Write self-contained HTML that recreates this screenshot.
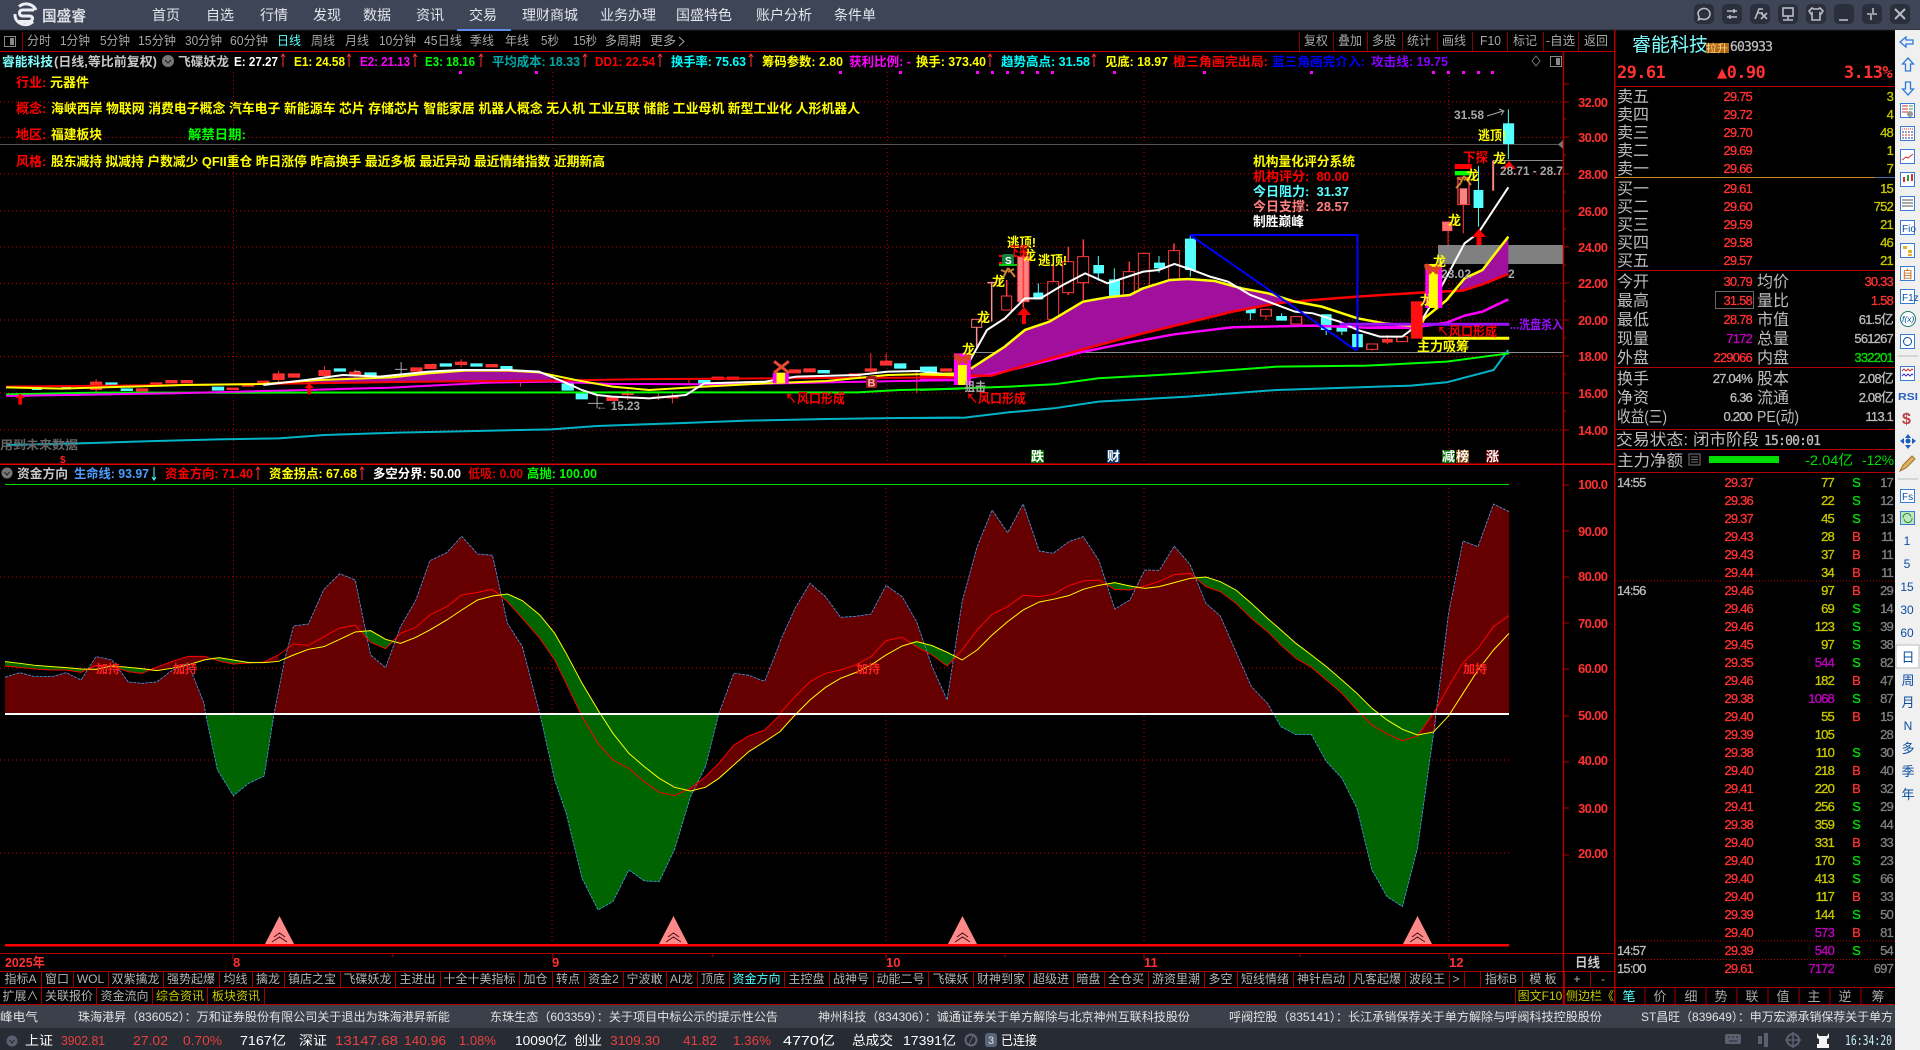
<!DOCTYPE html>
<html lang="zh-CN"><head><meta charset="utf-8"><title>国盛睿</title>
<style>
html,body{margin:0;padding:0;background:#000;width:1920px;height:1050px;overflow:hidden}
svg{display:block;position:absolute;left:0;top:0}
text{font-family:"Liberation Sans","Noto Sans CJK SC",sans-serif;white-space:pre}
.z{font-family:"Liberation Sans","WenQuanYi Zen Hei","Noto Sans CJK SC",sans-serif}
.b{font-weight:bold}
.nav{font-size:14px;fill:#e3e6ec;text-anchor:middle}
.tb{font-size:12.5px;fill:#a8a8a8}
.tab{font-size:12px;fill:#b4b4b4;text-anchor:middle}
.lg{font-size:12.5px;font-weight:bold}
.ax{font-size:13px;font-weight:bold;fill:#ff3030}
.n{font-family:"DejaVu Sans Mono","Liberation Mono",monospace;font-size:13px;letter-spacing:-.8px;stroke-width:.3px}
.e{text-anchor:end}
.l{font-size:16px;fill:#bdbdbd}
.r{fill:#ff3232;stroke:#ff3232}.y{fill:#c8c800;stroke:#c8c800}.s{fill:#bcbcbc;stroke:#bcbcbc}.g{fill:#808080;stroke:#808080}.m{fill:#c000c0;stroke:#c000c0}.gr{fill:#00e000;stroke:#00e000}
.tk{font-size:12px;fill:#e0e0e0}
.st{font-size:13px}
.yl{fill:#ffff00;font-weight:bold;font-size:13px}
.rd{fill:#ff0000;font-weight:bold;font-size:13px}
.ic{fill:none;stroke:#b8bdc8;stroke-width:1.6}
.side{font-size:12px;fill:#0b4ea2;text-anchor:middle}
.bx{fill:#fff;stroke:#3a7bd5;stroke-width:1}
.ln polyline,.ln path,.ln polygon{vector-effect:non-scaling-stroke}
</style></head><body>
<svg width="1920" height="1050" viewBox="0 0 1920 1050" xmlns="http://www.w3.org/2000/svg">
<defs>
<clipPath id="up"><rect x="-20" y="-100" width="2000" height="800"/></clipPath>
<clipPath id="dn"><rect x="-20" y="700" width="2000" height="800"/></clipPath>
</defs>
<rect width="1920" height="1050" fill="#000"/>

<!-- top bar -->
<rect width="1920" height="30" fill="#3e4557"/>
<rect y="29.500" width="1920" height="1" fill="#23262e"/>
<path d="M19 6.500A11 11 0 0 1 36 10M33 21.500A11 11 0 0 1 16 19.500M16 19.500A11 11 0 0 1 15 14" fill="none" stroke="#eceef2" stroke-width="3"/>
<path d="M34 10H23Q19.500 10 19.500 13T23 16H29Q32.500 16 32.500 18.500T29 21.500H18" fill="none" stroke="#eceef2" stroke-width="3"/>
<text x="42" y="21" font-size="15" font-weight="bold" fill="#d8dbe2" textLength="44" lengthAdjust="spacingAndGlyphs">国盛睿</text>
<text class="nav" x="166" y="20">首页</text><text class="nav" x="220" y="20">自选</text><text class="nav" x="274" y="20">行情</text><text class="nav" x="327" y="20">发现</text><text class="nav" x="377" y="20">数据</text><text class="nav" x="430" y="20">资讯</text><text class="nav" x="483" y="20">交易</text><text class="nav" x="550" y="20">理财商城</text><text class="nav" x="628" y="20">业务办理</text><text class="nav" x="704" y="20">国盛特色</text><text class="nav" x="784" y="20">账户分析</text><text class="nav" x="855" y="20">条件单</text>
<rect x="457" y="29" width="54" height="2" fill="#5b8def"/>
<g fill="#2a2f3b">
<rect x="1694" y="4" width="20" height="20" rx="5"/><rect x="1722" y="4" width="20" height="20" rx="5"/><rect x="1750" y="4" width="20" height="20" rx="5"/><rect x="1778" y="4" width="20" height="20" rx="5"/><rect x="1806" y="4" width="20" height="20" rx="5"/><rect x="1834" y="4" width="20" height="20" rx="5"/><rect x="1862" y="4" width="20" height="20" rx="5"/><rect x="1890" y="4" width="20" height="20" rx="5"/>
</g>
<g class="ic">
<path d="M1698 14a6 5.500 0 1 1 3 4.700l-2.500 1 .6-2.500Z"/><path d="M1701 14h.1M1704 14h.1M1707 14h.1"/>
<path d="M1727 11h10M1727 17h10M1734 9v4M1730 15v4"/>
<path d="M1755 19l4-10h4M1757 13h6M1761 13l6 6M1767 13l-6 6"/>
<rect x="1783" y="8" width="10" height="8"/><path d="M1783 20h10M1788 16v4"/>
<path d="M1812 8l-3 3 2 3 1-1v7h8v-7l1 1 2-3-3-3-2 1h-4Z"/>
<path d="M1839 20h9"/>
<path d="M1867 14h10M1873 8v5M1871 20v-5"/>
<path d="M1895 9l10 10M1905 9l-10 10" stroke-width="2"/>
</g>

<!-- toolbar -->
<rect x="4.500" y="36.500" width="11" height="10" fill="none" stroke="#888"/><rect x="10" y="38" width="4" height="7" fill="#888"/>
<g class="tb">
<text x="27" y="45" textLength="24" lengthAdjust="spacingAndGlyphs">分时</text><text x="60" y="45" textLength="30" lengthAdjust="spacingAndGlyphs">1分钟</text><text x="100" y="45" textLength="30" lengthAdjust="spacingAndGlyphs">5分钟</text><text x="138" y="45" textLength="38" lengthAdjust="spacingAndGlyphs">15分钟</text><text x="185" y="45" textLength="37" lengthAdjust="spacingAndGlyphs">30分钟</text><text x="230" y="45" textLength="38" lengthAdjust="spacingAndGlyphs">60分钟</text><text x="277" y="45" textLength="24" lengthAdjust="spacingAndGlyphs" style="fill:#55ffff">日线</text><text x="311" y="45" textLength="24" lengthAdjust="spacingAndGlyphs">周线</text><text x="345" y="45" textLength="24" lengthAdjust="spacingAndGlyphs">月线</text><text x="379" y="45" textLength="37" lengthAdjust="spacingAndGlyphs">10分钟</text><text x="424" y="45" textLength="38" lengthAdjust="spacingAndGlyphs">45日线</text><text x="470" y="45" textLength="24" lengthAdjust="spacingAndGlyphs">季线</text><text x="505" y="45" textLength="24" lengthAdjust="spacingAndGlyphs">年线</text><text x="541" y="45" textLength="18" lengthAdjust="spacingAndGlyphs">5秒</text><text x="573" y="45" textLength="24" lengthAdjust="spacingAndGlyphs">15秒</text><text x="605" y="45" textLength="36" lengthAdjust="spacingAndGlyphs">多周期</text><text x="650" y="45" textLength="26" lengthAdjust="spacingAndGlyphs">更多</text>
<text x="1304" y="45" textLength="24" lengthAdjust="spacingAndGlyphs">复权</text><text x="1338" y="45" textLength="24" lengthAdjust="spacingAndGlyphs">叠加</text><text x="1372" y="45" textLength="24" lengthAdjust="spacingAndGlyphs">多股</text><text x="1407" y="45" textLength="24" lengthAdjust="spacingAndGlyphs">统计</text><text x="1442" y="45" textLength="24" lengthAdjust="spacingAndGlyphs">画线</text><text x="1480" y="45" textLength="21" lengthAdjust="spacingAndGlyphs">F10</text><text x="1513" y="45" textLength="24" lengthAdjust="spacingAndGlyphs">标记</text><text x="1546" y="45" textLength="29" lengthAdjust="spacingAndGlyphs">-自选</text><text x="1584" y="45" textLength="24" lengthAdjust="spacingAndGlyphs">返回</text>
</g>
<path d="M679 37l5 4.500-5 4.500" fill="none" stroke="#a8a8a8"/>
<path d="M22.500 32V51M1299.500 32V51M1333.500 32V51M1367.500 32V51M1402.500 32V51M1437.500 32V51M1472.500 32V51M1507.500 32V51M1543.500 32V51M1578.500 32V51" stroke="#8a0000"/>
<rect y="51" width="1615" height="1" fill="#c00000"/>

<!-- grid main -->
<g stroke="#d00000" stroke-dasharray="1 3" fill="none" shape-rendering="crispEdges">
<path d="M0 102H1563M0 137.500H1563M0 174H1563M0 211H1563M0 247H1563M0 283.500H1563M0 320H1563M0 356.500H1563M0 393H1563M0 430H1563"/>
<path d="M233.500 72V464M553 72V464M887 72V464M1144 72V464M1449 72V464"/>
<path d="M0 577H1509M0 668H1509M0 760H1509M0 853H1509"/>
<path d="M233.500 484V945M552 484V945M886 484V945M1144 484V945M1449 484V945"/>
</g>
<rect x="0" y="144" width="1563" height="1" fill="#555"/>
<path d="M1563 140l-5 4.500 5 4.500Z" fill="#777"/>

<!-- legend -->
<text class="lg" x="2" y="66" fill="#7fffff" textLength="51" lengthAdjust="spacingAndGlyphs">睿能科技</text><text class="lg" x="54" y="66" fill="#c8c8c8" textLength="103" lengthAdjust="spacingAndGlyphs">(日线,等比前复权)</text>
<circle cx="168" cy="61" r="6" fill="#777"/><path d="M165 60l3 3 3-3" stroke="#222" fill="none"/>
<text class="lg" x="178" y="66" fill="#c8c8c8" textLength="51" lengthAdjust="spacingAndGlyphs">飞碟妖龙</text>
<text class="lg" x="234" y="66" fill="#fff" textLength="44" lengthAdjust="spacingAndGlyphs">E: 27.27</text>
<text class="lg" x="294" y="66" fill="#ffff00" textLength="51" lengthAdjust="spacingAndGlyphs">E1: 24.58</text>
<text class="lg" x="360" y="66" fill="#ff00ff" textLength="50" lengthAdjust="spacingAndGlyphs">E2: 21.13</text>
<text class="lg" x="425" y="66" fill="#00ff00" textLength="50" lengthAdjust="spacingAndGlyphs">E3: 18.16</text>
<text class="lg" x="492" y="66" fill="#00a8a8" textLength="88" lengthAdjust="spacingAndGlyphs">平均成本: 18.33</text>
<text class="lg" x="595" y="66" fill="#ff0000" textLength="60" lengthAdjust="spacingAndGlyphs">DD1: 22.54</text>
<text class="lg" x="671" y="66" fill="#00ffff" textLength="75" lengthAdjust="spacingAndGlyphs">换手率: 75.63</text>
<text class="lg" x="762" y="66" fill="#ffff00" textLength="81" lengthAdjust="spacingAndGlyphs">筹码参数: 2.80</text>
<text class="lg" x="849" y="66" fill="#ff00ff" textLength="62" lengthAdjust="spacingAndGlyphs">获利比例: -</text>
<text class="lg" x="916" y="66" fill="#ffff00" textLength="70" lengthAdjust="spacingAndGlyphs">换手: 373.40</text>
<text class="lg" x="1001" y="66" fill="#00ffff" textLength="89" lengthAdjust="spacingAndGlyphs">趋势高点: 31.58</text>
<text class="lg" x="1105" y="66" fill="#ffff00" textLength="63" lengthAdjust="spacingAndGlyphs">见底: 18.97</text>
<text class="lg" x="1173" y="66" fill="#ff0000" textLength="95" lengthAdjust="spacingAndGlyphs">橙三角画完出局:</text>
<text class="lg" x="1272" y="66" fill="#0000ff" textLength="93" lengthAdjust="spacingAndGlyphs">蓝三角画完介入:</text>
<text class="lg" x="1371" y="66" fill="#8800ff" textLength="77" lengthAdjust="spacingAndGlyphs">攻击线: 19.75</text>
<path d="M283 54V67M281 57l2-3 2 3M349 54V67M347 57l2-3 2 3M415 54V67M413 57l2-3 2 3M481 54V67M479 57l2-3 2 3M585 54V67M583 57l2-3 2 3M660 54V67M658 57l2-3 2 3M751 54V67M749 57l2-3 2 3M990 54V67M988 57l2-3 2 3M1094 54V67M1092 57l2-3 2 3" stroke="#ff3333" fill="none"/>
<path d="M1536 56l4 5-4 5-4-5Z" fill="none" stroke="#777"/><rect x="1550.500" y="56.500" width="11" height="10" fill="none" stroke="#888"/><rect x="1556" y="58" width="4" height="7" fill="#888"/>
<path d="M459 71h3v3h-3zM535 71h3v3h-3zM839 71h3v3h-3zM899 71h3v3h-3zM976 71h3v3h-3zM991 71h3v3h-3zM1006 71h3v3h-3zM1021 71h3v3h-3zM1036 71h3v3h-3zM1051 71h3v3h-3zM1113 71h3v3h-3zM1203 71h3v3h-3zM1310 71h3v3h-3zM1432 71h3v3h-3zM1447 71h3v3h-3zM1462 71h3v3h-3zM1477 71h3v3h-3zM1491 71h3v3h-3z" fill="#ff00ff"/>

<!-- info block -->
<text x="16" y="87" class="rd">行业:</text><text x="50" y="87" class="yl" textLength="39" lengthAdjust="spacingAndGlyphs">元器件</text>
<text x="16" y="113" class="rd">概念:</text><text x="51" y="113" class="yl" textLength="809" lengthAdjust="spacingAndGlyphs">海峡西岸 物联网 消费电子概念 汽车电子 新能源车 芯片 存储芯片 智能家居 机器人概念 无人机 工业互联 储能 工业母机 新型工业化 人形机器人</text>
<text x="16" y="139" class="rd">地区:</text><text x="51" y="139" class="yl" textLength="51" lengthAdjust="spacingAndGlyphs">福建板块</text>
<text x="188" y="139" font-size="13" font-weight="bold" fill="#00ff00" textLength="58" lengthAdjust="spacingAndGlyphs">解禁日期:</text>
<text x="16" y="166" class="rd">风格:</text><text x="51" y="166" class="yl" textLength="554" lengthAdjust="spacingAndGlyphs">股东减持 拟减持 户数减少 QFII重仓 昨日涨停 昨高换手 最近多板 最近异动 最近情绪指数 近期新高</text>

<!-- main: left part candles and lines (zoom-8 space) -->
<g class="ln" transform="translate(0,340) scale(.6124,.3333)">
<path fill="#55ffff" d="M52 140h16v10h-16zM100 140h16v8h-16zM172 127h20v10h-20zM197 145h20v8h-20zM346 140h20v12h-20zM545 85h20v10h-20zM595 97h20v13h-20zM718 70h20v10h-20zM768 70h20v10h-20zM817 78h20v25h-20zM867 97h20v23h-20zM917 130h20v22h-20zM940 160h20v18h-20zM1140 120h20v13h-20zM1335 90h20v10h-20zM1460 70h20v16h-20zM1510 80h20v20h-20z"/>
<path fill="#ff3030" d="M147 125h20v25h-20zM222 145h20v10h-20zM245 127h20v13h-20zM270 120h20v10h-20zM295 120h20v10h-20zM370 143h20v7h-20zM395 130h20v10h-20zM420 122h20v8h-20zM445 100h20v20h-20zM470 100h20v13h-20zM520 90h20v18h-20zM570 95h20v10h-20zM670 82h20v13h-20zM693 72h20v15h-20zM743 65h20v10h-20zM793 72h20v10h-20zM990 170h20v13h-20zM1015 155h20v10h-20zM1065 170h20v5h-20zM1088 168h20v7h-20zM1162 110h20v10h-20zM1187 110h20v10h-20zM1288 88h20v12h-20zM1312 85h20v12h-20zM1386 100h20v10h-20zM1412 85h20v10h-20zM1437 62h20v15h-20zM1535 85h20v10h-20z"/>
<path stroke="#ff3030" fill="none" stroke-width="1" d="M157 118V160M455 92V130M530 78V112M580 88V112M753 58V82M850 100V140M1098 160V190M1075 160V180M1422 40V96M1447 40V64M1497 95V160M1125 118V135M1025 150V180"/>
<path stroke="#aaa" fill="none" d="M655 66V105M645 88h20M578 94h10M975 165V205M960 190h25"/>
<polygon fill="#a0109c" points="500,122 560,112 640,110 700,98 760,90 830,90 880,95 905,120 700,125 500,130"/>
<polyline fill="none" stroke="#00b4c8" stroke-width="2" points="10,315 130,310 255,303 355,298 455,295 530,285 650,278 750,274 900,268 975,258 1100,250 1220,242 1350,237 1470,234 1568,233"/>
<polyline fill="none" stroke="#00ff00" stroke-width="2" points="10,163 160,158 1400,157 1470,150 1568,146"/>
<polyline fill="none" stroke="#ff00ff" stroke-width="2" points="10,168 280,160 500,150 640,143 800,128 900,125 1000,132 1200,133 1350,127 1568,120"/>
<polyline fill="none" stroke="#ff0000" stroke-width="2" points="10,140 300,135 500,130 700,125 900,122 1030,118 1260,115 1568,112"/>
<polyline fill="none" stroke="#ffff00" stroke-width="2" points="10,142 100,146 300,135 430,132 520,120 640,112 700,100 760,92 830,92 880,97 940,120 1000,140 1060,150 1150,140 1250,130 1350,123 1450,105 1560,100"/>
<polyline fill="none" stroke="#ffffff" stroke-width="2" points="430,135 500,120 560,105 620,110 700,95 750,90 830,90 880,95 920,125 950,150 975,165 1000,170 1060,175 1120,165 1150,130 1250,125 1300,110 1400,105 1450,95 1500,93 1568,108"/>
<path fill="#ff0000" d="M33 160l-8 14h5v20h6v-20h5ZM505 130l-8 14h5v19h6v-19h5Z"/>
<rect x="1262" y="98" width="26" height="32" fill="#ff00ff"/><rect x="1268" y="98" width="14" height="32" fill="#ffff00"/>
<path d="M1264 64l24 34M1288 64l-24 34" stroke="#e64a30" stroke-width="3" fill="none"/>
</g>
<rect x="866" y="376" width="11" height="12" rx="2" fill="#a01818"/>
<text x="867.500" y="386.500" font-size="11" font-weight="bold" fill="#ffb0b0">B</text>
<text x="785" y="403" class="rd" textLength="60" lengthAdjust="spacingAndGlyphs">↖风口形成</text>
<text x="596" y="410" font-size="12" font-weight="bold" fill="#a8a8a8" textLength="44" lengthAdjust="spacingAndGlyphs">← 15.23</text>
<text x="0" y="449" font-size="12" font-weight="bold" fill="#666" textLength="78" lengthAdjust="spacingAndGlyphs">用到未来数据</text>
<text x="60" y="463" font-size="10" font-weight="bold" fill="#ff2020">$</text>

<!-- main: right part (zoom-7 space) -->
<rect x="1438" y="245" width="125" height="19" fill="#808080"/>
<rect x="975" y="352" width="588" height="1" fill="#8a8a8a"/>
<path d="M1493 160.500H1563" stroke="#888"/>
<g class="ln" transform="translate(940,220) scale(.3333)">
<path fill="#55ffff" d="M280 218h30v20h-30zM460 135h32v25h-32zM507 178h33v57h-33zM642 128h33v17h-33zM735 56h33v94h-33zM780 188h33v27h-33zM870 200h33v48h-33z"/>
<path stroke="#55ffff" stroke-width="1" fill="none" d="M295 190V238M475 108V182M523 145V243M657 108V158M751 45V170M885 248V258"/>
<g fill="none" stroke="#ff3c3c" stroke-width="3" style="vector-effect:none">
<rect x="95" y="298" width="30" height="24" stroke="#ff7070"/>
<rect x="185" y="228" width="30" height="42"/>
<rect x="233" y="110" width="34" height="135" fill="#ff8080"/>
<rect x="323" y="185" width="33" height="113"/>
<rect x="368" y="125" width="33" height="93"/>
<rect x="413" y="110" width="33" height="78"/>
<rect x="550" y="155" width="33" height="70"/>
<rect x="595" y="100" width="33" height="105"/>
<rect x="686" y="92" width="33" height="103"/>
<rect x="823" y="188" width="33" height="29"/>
</g>
<path fill="none" stroke="#ff3c3c" stroke-width="1.500" d="M200 180V228M250 90V262M340 130V185M340 298V310M385 80V125M385 218V225M430 58V110M430 188V240M568 125V155M568 225V265M612 205V240M702 70V92M840 217V228"/>
<path fill="none" stroke="#ff9090" stroke-width="1.500" d="M110 322V380M155 188V305M142 188H165"/>
</g>
<g class="ln" transform="translate(920,100) scale(.4464,.3333)">
<path fill="#55ffff" d="M695 560h24v47h-24zM730 615h22v25h-22zM798 648h24v14h-24zM898 643h24v47h-24zM933 680h24v15h-24zM968 702h24v40h-24zM0 815h38v-15h-38z"/>
<path stroke="#55ffff" fill="none" d="M707 607V617M740 640V660M810 640V648M910 690V705M945 695V705"/>
<g fill="none" stroke="#ff3c3c" stroke-width="3" style="vector-effect:none"><rect x="763" y="628" width="24" height="20"/><rect x="831" y="650" width="24" height="22"/><rect x="1001" y="732" width="24" height="16"/><rect x="1068" y="710" width="24" height="15"/></g>
<path fill="#ff3030" d="M1035 717h24v11h-24z"/>
<path stroke="#ff3030" fill="none" d="M775 648V660M1047 705V733M1013 748V752"/>
<polygon fill="#a0109c" points="115,805 190,740 235,690 290,665 365,605 420,592 470,585 500,565 560,540 600,537 660,543 720,565 780,580 840,605 800,610 700,635 640,655 500,700 360,750 240,795 160,827 115,830"/>
<polygon fill="#a0109c" points="1205,572 1220,535 1260,510 1318,410 1318,522 1260,553 1215,572"/>
<polyline fill="none" stroke="#00b4c8" stroke-width="2" points="0,954 100,953 200,937 300,925 400,905 600,890 800,870 1100,857 1180,847 1285,810 1318,750"/>
<polyline fill="none" stroke="#00ff00" stroke-width="2" points="0,870 100,865 200,860 300,853 400,835 600,820 800,800 1000,797 1180,785 1320,760"/>
<polyline fill="none" stroke="#ff00ff" stroke-width="2.500" points="0,840 80,840 170,820 240,798 360,757 460,730 570,703 700,682 880,677 1000,683 1120,680 1180,668 1220,647 1260,635 1318,598"/>
<polyline fill="none" stroke="#ff0000" stroke-width="2.500" points="0,828 160,827 240,795 360,750 500,700 640,655 700,635 800,610 880,600 980,590 1120,578 1215,572 1260,553 1318,522"/>
<polyline fill="none" stroke="#ffff00" stroke-width="2.500" points="0,823 75,825 115,805 190,740 235,690 290,665 365,605 420,592 470,585 500,565 560,540 600,537 660,543 720,565 780,580 840,605 900,620 980,655 1040,670 1120,680 1130,655 1180,600 1220,535 1260,510 1318,410"/>
<polyline fill="none" stroke="#ffffff" stroke-width="2" points="100,810 150,690 190,655 235,595 270,595 320,555 370,520 420,550 500,515 535,510 570,492 610,510 650,530 690,545 740,585 790,610 840,635 880,640 940,665 980,690 1030,710 1080,710 1120,670 1160,580 1220,430 1250,400 1318,262"/>
<path fill="none" stroke="#0000ff" stroke-width="2" d="M605 405H980V750M605 405L978 752"/>
<path stroke="#9a10ff" stroke-width="3" fill="none" d="M940 673H1320"/>
<path stroke="#ff00ff" stroke-width="2" fill="none" d="M1000 684H1120"/>
<path stroke="#ffff00" stroke-width="3" fill="none" d="M1125 715H1320"/>
<rect x="1100" y="604" width="26" height="112" fill="#ff1010"/>
<rect x="76" y="760" width="38" height="95" fill="#ff00ff"/><rect x="85" y="795" width="20" height="60" fill="#ffff00"/>
<rect x="1132" y="492" width="38" height="132" fill="#ff00ff"/><rect x="1140" y="492" width="20" height="132" fill="#ffff00"/>
<rect x="1170" y="365" width="22" height="28" fill="#ff7070" stroke="#ff3030"/>
<path fill="none" stroke="#ff3030" d="M1183 393V435"/>
<rect x="1205" y="232" width="25" height="82" fill="none" stroke="#ff3c3c" stroke-width="3" style="vector-effect:none"/><rect x="1209" y="265" width="17" height="48" fill="#ff8080"/>
<path fill="none" stroke="#ff3c3c" d="M1217 314V400"/>
<rect x="1240" y="270" width="22" height="54" fill="#55ffff"/><path stroke="#55ffff" fill="none" d="M1251 198V380"/>
<path stroke="#ff8080" fill="none" stroke-width="2" d="M1284 182V272"/>
<rect x="1306" y="70" width="25" height="62" fill="#55ffff"/><path stroke="#55ffff" fill="none" d="M1318 28V178"/>
<rect x="1198" y="192" width="38" height="15" fill="#ff0000"/><rect x="1198" y="213" width="38" height="13" fill="#00ff00"/>
</g>
<path fill="#ff0000" d="M1479 229l-7 8h4.500v8h5v-8h4.500ZM1509 161l-7 8h4.500v-1h5v1h4.500ZM1024 307l-7 8h5v9h4v-9h5Z"/>
<g fill="none" stroke="#d08030" stroke-width="2">
<path d="M1008 268l-4 8-4 4M1008 268l4 5 3 4M1006 272l-5-2M1008 272l6-3M1008 265v1"/>
<path d="M1464 176l-4 8-4 4M1464 176l4 5 3 4M1462 180l-5-2M1464 180l6-3"/>
</g>
<path d="M962.500 357l-6-3.500-3 1 1 5 3 1-1 3 3 1 3-3 3 3 3-1-1-3 3-1 1-5-3-1Z" fill="#d8402a"/>
<path d="M1433 267l-6-3.500-3 1 1 5 3 1-1 3 3 1 3-3 3 3 3-1-1-3 3-1 1-5-3-1Z" fill="#d8402a"/>
<rect x="1002" y="254" width="12" height="12" rx="2" fill="#148040"/><text x="1005" y="264" font-size="10" font-weight="bold" fill="#fff">S</text>
<path d="M999 256h3M999 263h3M1014 256h3" stroke="#ff0000" stroke-width="2"/><path d="M999 265h18" stroke="#00cc00" stroke-width="2"/>

<text x="1253" y="166" class="yl" textLength="102" lengthAdjust="spacingAndGlyphs">机构量化评分系统</text>
<text x="1253" y="181" class="rd" textLength="96" lengthAdjust="spacingAndGlyphs">机构评分:  80.00</text>
<text x="1253" y="196" font-size="13" font-weight="bold" fill="#55ffff" textLength="96" lengthAdjust="spacingAndGlyphs">今日阻力:  31.37</text>
<text x="1253" y="211" font-size="13" font-weight="bold" fill="#ff8080" textLength="96" lengthAdjust="spacingAndGlyphs">今日支撑:  28.57</text>
<text x="1253" y="226" font-size="13" font-weight="bold" fill="#fff" textLength="51" lengthAdjust="spacingAndGlyphs">制胜巅峰</text>
<g class="yl">
<text x="1007" y="247" textLength="29" lengthAdjust="spacingAndGlyphs">逃顶!</text><text x="1038" y="265" textLength="29" lengthAdjust="spacingAndGlyphs">逃顶!</text><text x="1478" y="140" textLength="28" lengthAdjust="spacingAndGlyphs">逃顶!</text>
<text x="1023" y="260">龙</text><text x="992" y="286">龙</text><text x="977" y="322">龙</text><text x="962" y="354">龙</text><text x="1448" y="225">龙</text><text x="1466" y="180">龙</text><text x="1493" y="163">龙</text><text x="1433" y="266">龙</text><text x="1420" y="305">龙</text>
<text x="1417" y="351" textLength="52" lengthAdjust="spacingAndGlyphs">主力吸筹</text>
</g>
<g class="rd">
<text x="1010" y="256" fill="#f00" textLength="18" lengthAdjust="spacingAndGlyphs">下探</text><text x="1463" y="162" textLength="25" lengthAdjust="spacingAndGlyphs">下探</text>
<text x="966" y="403" textLength="60" lengthAdjust="spacingAndGlyphs">↖风口形成</text><text x="1437" y="336" textLength="60" lengthAdjust="spacingAndGlyphs">↖风口形成</text>
</g>
<g font-size="12" font-weight="bold" fill="#a8a8a8">
<text x="1454" y="119" textLength="30" lengthAdjust="spacingAndGlyphs">31.58</text><text x="1500" y="175" textLength="63" lengthAdjust="spacingAndGlyphs">28.71 - 28.7</text><text x="1441" y="278" textLength="30" lengthAdjust="spacingAndGlyphs">23.02</text><text x="1508" y="278">2</text><text x="964" y="391" textLength="22" lengthAdjust="spacingAndGlyphs">狙击</text>
</g>
<path d="M1487 116l16-5M1499 109l5 2-3 4" stroke="#a8a8a8" fill="none"/>
<text x="1510" y="329" font-size="12.500" font-weight="bold" fill="#9a10ff" textLength="53" lengthAdjust="spacingAndGlyphs">...洗盘杀入</text>
<g font-size="13" font-weight="bold" fill="#fff">
<rect x="1031" y="450" width="13" height="13" fill="#007000"/><text x="1031" y="461">跌</text>
<rect x="1107" y="450" width="13" height="13" fill="#003366"/><text x="1107" y="461">财</text>
<rect x="1442" y="450" width="13" height="13" fill="#007000"/><text x="1442" y="461">减</text>
<rect x="1456" y="450" width="13" height="13" fill="#7a4000"/><text x="1456" y="461">榜</text>
<rect x="1486" y="450" width="13" height="13" fill="#660000"/><text x="1486" y="461">涨</text>
</g>

<!-- sub pane -->
<rect y="463.500" width="1615" height="1.500" fill="#e00000"/>
<circle cx="7" cy="473" r="5.500" fill="#777"/><path d="M4.500 472l2.500 3 2.500-3" stroke="#222" fill="none"/>
<text class="lg" x="17" y="478" fill="#c8c8c8" textLength="51" lengthAdjust="spacingAndGlyphs">资金方向</text>
<text class="lg" x="74" y="478" fill="#4f9cff" textLength="75" lengthAdjust="spacingAndGlyphs">生命线: 93.97</text>
<text class="lg" x="165" y="478" fill="#ff0000" textLength="88" lengthAdjust="spacingAndGlyphs">资金方向: 71.40</text>
<text class="lg" x="269" y="478" fill="#ffff00" textLength="88" lengthAdjust="spacingAndGlyphs">资金拐点: 67.68</text>
<text class="lg" x="373" y="478" fill="#fff" textLength="88" lengthAdjust="spacingAndGlyphs">多空分界: 50.00</text>
<text class="lg" x="468" y="478" fill="#e00000" textLength="55" lengthAdjust="spacingAndGlyphs">低吸: 0.00</text>
<text class="lg" x="527" y="478" fill="#00ff00" textLength="70" lengthAdjust="spacingAndGlyphs">高抛: 100.00</text>
<path d="M154 467V480M152 477l2 3 2-3" stroke="#55ffff" fill="none"/><path d="M258 467V480M256 470l2-3 2 3M362 467V480M360 470l2-3 2 3" stroke="#ff3333" fill="none"/>
<rect x="5" y="484" width="1504" height="1" fill="#00e000"/>

<g class="ln" transform="translate(0,480) scale(.4975,.3333)">
<polygon clip-path="url(#up)" fill="#660000" points="10,700 10,592 40,578 70,590 105,590 133,578 163,600 193,530 225,540 258,606 285,610 315,606 345,572 378,550 410,670 413,700 437,870 469,947 500,910 531,888 551,700 572,540 590,438 620,432 651,328 683,281 714,300 745,525 775,563 805,440 836,360 864,242 898,218 928,169 960,222 990,226 1020,430 1050,500 1085,700 1115,900 1138,1000 1170,1195 1202,1290 1232,1265 1264,1170 1295,1203 1325,1205 1356,1108 1388,950 1418,860 1445,700 1475,580 1505,586 1537,604 1568,488 1568,700"/>
<polygon clip-path="url(#dn)" fill="#006400" points="10,700 413,700 437,870 469,947 500,910 531,888 551,700 1085,700 1115,900 1138,1000 1170,1195 1202,1290 1232,1265 1264,1170 1295,1203 1325,1205 1356,1108 1388,950 1418,860 1445,700 1568,700"/>
<polygon fill="#006400" points="10,545 40,550 70,556 105,560 133,563 163,567 178,568 163,577 133,570 105,570 70,567 40,562 10,558"/>
<polygon fill="#006400" points="240,560 258,562 285,566 300,568 285,580 258,575 240,568"/>
<polygon fill="#006400" points="420,533 440,533 469,540 500,545 531,546 500,549 469,552 440,543 420,537"/>
<polygon fill="#006400" points="722,452 745,452 775,478 792,486 775,506 745,487"/>
<polygon fill="#006400" points="1000,343 1020,342 1050,362 1085,405 1115,460 1138,520 1170,610 1202,690 1232,760 1264,820 1295,860 1325,895 1356,922 1378,930 1356,947 1325,937 1295,905 1264,865 1232,840 1202,790 1170,710 1138,610 1115,540 1085,475 1050,415 1020,365"/>
<polygon fill="#660000" points="1378,930 1388,925 1418,890 1445,850 1475,795 1505,768 1537,750 1568,705 1568,755 1537,785 1505,815 1475,855 1445,895 1418,922 1388,933"/>
<polygon fill="#660000" points="300,568 315,562 345,545 378,529 410,529 420,535 410,540 378,555 345,565 315,572"/>
<polygon fill="#660000" points="531,546 551,532 560,525 560,544 531,548"/>
<polyline fill="none" stroke="#4a9cf0" stroke-width=".8" stroke-dasharray="3 1" points="10,592 40,578 70,590 105,590 133,578 163,600 193,530 225,540 258,606 285,610 315,606 345,572 378,550 410,670 413,700 437,870 469,947 500,910 531,888 551,700 572,540 590,438 620,432 651,328 683,281 714,300 745,525 775,563 805,440 836,360 864,242 898,218 928,169 960,222 990,226 1020,430 1050,500 1085,700 1115,900 1138,1000 1170,1195 1202,1290 1232,1265 1264,1170 1295,1203 1325,1205 1356,1108 1388,950 1418,860 1445,700 1475,580 1505,586 1537,604 1568,488"/>
<polyline fill="none" stroke="#ff0000" stroke-width="1" points="10,558 40,562 70,567 105,570 133,570 163,577 193,556 225,560 258,575 285,580 315,562 345,545 378,529 410,529 440,543 469,552 500,549 531,546 560,525 590,492 620,496 651,470 683,444 714,436 745,487 775,506 805,460 836,442 864,405 898,380 928,345 960,337 990,328 1020,365 1050,415 1085,475 1115,540 1138,610 1170,710 1202,790 1232,840 1264,865 1295,905 1325,937 1356,947 1388,925 1418,890 1445,850 1475,795 1505,768 1537,750 1568,705"/>
<polyline fill="none" stroke="#ffff00" stroke-width="1" points="10,545 40,550 70,556 105,560 133,563 163,567 193,568 225,558 258,562 285,566 315,572 345,565 378,555 410,540 440,533 469,540 500,548 531,548 560,544 590,525 620,508 651,500 683,478 714,456 745,452 775,478 805,490 836,472 864,450 898,420 928,390 960,360 990,348 1020,342 1050,362 1085,405 1115,460 1138,520 1170,610 1202,690 1232,760 1264,820 1295,860 1325,895 1356,922 1388,933 1418,922 1445,895 1475,855 1505,815 1537,785 1568,755"/>
</g>
<g class="ln" transform="translate(780,480) scale(.5357,.3333)">
<polygon clip-path="url(#up)" fill="#660000" points="0,700 0,485 28,385 56,310 85,350 113,412 141,409 170,402 198,316 228,350 255,425 284,560 312,660 340,365 368,200 396,90 425,158 454,72 484,213 510,220 539,185 566,170 595,240 625,387 653,360 681,270 708,271 736,198 766,255 795,370 822,408 851,515 880,620 910,670 921,700 1225,700 1248,400 1275,183 1303,200 1332,72 1361,95 1361,700"/>
<polygon clip-path="url(#dn)" fill="#006400" points="921,700 935,740 963,764 992,764 1020,845 1049,895 1077,985 1105,1170 1133,1250 1162,1280 1190,1105 1220,760 1225,700"/>
<polygon fill="#006400" points="245,485 255,485 284,497 312,517 330,528 312,558 284,525 255,500 245,492"/>
<polygon fill="#006400" points="608,310 625,308 653,318 665,322 653,330 625,328 608,315"/>
<polygon fill="#006400" points="775,290 795,291 822,305 851,330 880,370 910,415 935,450 963,490 992,525 1020,560 1049,600 1077,640 1105,685 1133,720 1162,748 1190,765 1162,782 1133,762 1105,735 1077,690 1049,640 1020,600 992,562 963,535 935,495 910,455 880,415 851,370 822,335 795,320"/>
<polygon fill="#660000" points="1190,765 1220,700 1225,690 1225,745 1220,756"/>
<polygon fill="#660000" points="0,700 35,700 0,755"/>
<polyline fill="none" stroke="#4a9cf0" stroke-width=".8" stroke-dasharray="3 1" points="0,485 28,385 56,310 85,350 113,412 141,409 170,402 198,316 228,350 255,425 284,560 312,660 340,365 368,200 396,90 425,158 454,72 484,213 510,220 539,185 566,170 595,240 625,387 653,360 681,270 708,271 736,198 766,255 795,370 822,408 851,515 880,620 910,670 935,740 963,764 992,764 1020,845 1049,895 1077,985 1105,1170 1133,1250 1162,1280 1190,1105 1220,760 1248,400 1275,183 1303,200 1332,72 1361,95"/>
<polyline fill="none" stroke="#ff0000" stroke-width="1" points="0,700 28,650 56,605 85,580 113,570 141,555 170,530 198,482 228,472 255,500 284,525 312,558 340,510 368,450 396,403 425,380 454,346 484,350 510,343 539,317 566,303 595,300 625,328 653,330 681,318 708,304 736,284 766,280 795,320 822,335 851,370 880,415 910,455 935,495 963,535 992,562 1020,600 1049,640 1077,690 1105,735 1133,762 1162,782 1190,768 1220,700 1248,620 1275,548 1303,505 1332,440 1361,407"/>
<polyline fill="none" stroke="#ffff00" stroke-width="1" points="0,755 28,705 56,660 85,622 113,595 141,578 170,555 198,525 228,498 255,485 284,497 312,517 340,540 368,510 396,465 425,425 454,390 484,366 510,358 539,347 566,328 595,316 625,308 653,318 681,325 708,320 736,308 766,295 795,291 822,305 851,330 880,370 910,415 935,450 963,490 992,525 1020,560 1049,600 1077,640 1105,685 1133,720 1162,748 1190,765 1220,756 1248,708 1275,640 1303,570 1332,510 1361,460"/>
</g>
<rect x="5" y="713" width="1504" height="2" fill="#ffffff"/>
<g fill="#ff8888"><path d="M279.500 916L265 944H294ZM673.500 916L659 944H688ZM962.500 916L948 944H977ZM1417.500 916L1403 944H1432Z"/></g>
<g fill="none" stroke="#401018"><path d="M274 937l5.500-4 5.500 4M272 942l7.500-5 7.500 5M668 937l5.500-4 5.500 4M666 942l7.500-5 7.500 5M957 937l5.500-4 5.500 4M955 942l7.500-5 7.500 5M1412 937l5.500-4 5.500 4M1410 942l7.500-5 7.500 5"/></g>
<rect x="5" y="944" width="1504" height="2.500" fill="#ff0000"/>
<g font-size="12" fill="#ff2020" font-weight="bold"><text x="96" y="673">加持</text><text x="173" y="673">加持</text><text x="856" y="673">加持</text><text x="1463" y="673">加持</text></g>

<!-- axes -->
<path d="M1563.500 52V1005" stroke="#b00000" stroke-width="1.500"/>
<path d="M1563 84h6M1563 102h6M1563 119h3M1563 137h6M1563 155h3M1563 174h6M1563 192h3M1563 211h6M1563 229h3M1563 247h6M1563 265h3M1563 283h6M1563 301h3M1563 320h6M1563 338h3M1563 356h6M1563 374h3M1563 393h6M1563 411h3M1563 430h6M1563 485h6M1563 531h6M1563 577h6M1563 623h6M1563 669h6M1563 716h6M1563 762h6M1563 808h6M1563 855h6" stroke="#b00000"/>
<g class="ax">
<text x="1578" y="107" textLength="30">32.00</text><text x="1578" y="142" textLength="30">30.00</text><text x="1578" y="179" textLength="30">28.00</text><text x="1578" y="216" textLength="30">26.00</text><text x="1578" y="252" textLength="30">24.00</text><text x="1578" y="288" textLength="30">22.00</text><text x="1578" y="325" textLength="30">20.00</text><text x="1578" y="361" textLength="30">18.00</text><text x="1578" y="398" textLength="30">16.00</text><text x="1578" y="435" textLength="30">14.00</text>
<text x="1578" y="489" textLength="30">100.0</text><text x="1578" y="536" textLength="30">90.00</text><text x="1578" y="581" textLength="30">80.00</text><text x="1578" y="628" textLength="30">70.00</text><text x="1578" y="673" textLength="30">60.00</text><text x="1578" y="720" textLength="30">50.00</text><text x="1578" y="765" textLength="30">40.00</text><text x="1578" y="813" textLength="30">30.00</text><text x="1578" y="858" textLength="30">20.00</text>
</g>

<!-- date row -->
<rect y="953" width="1615" height="1" fill="#b00000"/>
<path d="M233 954v5M393 954v3M553 954v5M713 954v3M886 954v5M1005 954v3M1144 954v5M1300 954v3M1449 954v5" stroke="#b00000"/>
<g font-size="13" font-weight="bold" fill="#ff3030">
<text x="5" y="967" textLength="40" lengthAdjust="spacingAndGlyphs">2025年</text><text x="233" y="967">8</text><text x="552" y="967">9</text><text x="886" y="967">10</text><text x="1144" y="967">11</text><text x="1449" y="967">12</text>
</g>
<text x="1575" y="967" font-size="13" font-weight="bold" fill="#c8c8c8" textLength="25" lengthAdjust="spacingAndGlyphs">日线</text>

<!-- tabs -->
<rect y="971" width="1615" height="1" fill="#b00000"/><rect y="987" width="1615" height="1" fill="#b00000"/><rect y="1004" width="1920" height="1" fill="#b00000"/>
<path d="M41.500 971V987M73.500 971V987M108.500 971V987M163.500 971V987M219.500 971V987M252.500 971V987M284.500 971V987M340.500 971V987M395.500 971V987M440.500 971V987M519.500 971V987M552.500 971V987M584.500 971V987M623.500 971V987M666.500 971V987M697.500 971V987M729.500 971V987M784.500 971V987M829.500 971V987M873.500 971V987M928.500 971V987M973.500 971V987M1029.500 971V987M1073.500 971V987M1104.500 971V987M1148.500 971V987M1204.500 971V987M1237.500 971V987M1293.500 971V987M1349.500 971V987M1405.500 971V987M1449.500 971V987M1464.500 971V987M1480.500 971V987M1522.500 971V987M1564.500 971V987M1590.500 971V987M41.500 988V1004M96.500 988V1004M152.500 988V1004M207.500 988V1004M264.500 988V1004M1515.500 988V1004M1564.500 988V1004" stroke="#a00000" fill="none"/>
<g class="tab">
<text x="20.500" y="983">指标A</text><text x="57" y="983">窗口</text><text x="90.500" y="983">WOL</text><text x="135.500" y="983">双紫擒龙</text><text x="191" y="983">强势起爆</text><text x="235.500" y="983">均线</text><text x="268" y="983">擒龙</text><text x="312" y="983">镇店之宝</text><text x="367.500" y="983">飞碟妖龙</text><text x="417.500" y="983">主进出</text><text x="479.500" y="983">十全十美指标</text><text x="535.500" y="983">加仓</text><text x="568" y="983">转点</text><text x="603.500" y="983">资金2</text><text x="644.500" y="983">宁波敢</text><text x="681.500" y="983">AI龙</text><text x="713" y="983">顶底</text><text x="756.500" y="983" style="fill:#55ffff">资金方向</text><text x="806.500" y="983">主控盘</text><text x="851" y="983">战神号</text><text x="900.500" y="983">动能二号</text><text x="950.500" y="983">飞碟妖</text><text x="1001" y="983">财神到家</text><text x="1051" y="983">超级进</text><text x="1088.500" y="983">暗盘</text><text x="1126" y="983">全仓买</text><text x="1176" y="983">游资里潮</text><text x="1220.500" y="983">多空</text><text x="1265" y="983">短线情绪</text><text x="1321" y="983">神针启动</text><text x="1377" y="983">凡客起爆</text><text x="1427" y="983">波段王</text><text x="1456" y="983">&gt;</text><text x="1501" y="983">指标B</text><text x="1543" y="983">模 板</text><text x="1577" y="983">+</text><text x="1603" y="983">-</text>
<text x="20.500" y="1000">扩展∧</text><text x="69" y="1000">关联报价</text><text x="124.500" y="1000">资金流向</text><text x="180" y="1000" style="fill:#c8c800">综合资讯</text><text x="236" y="1000" style="fill:#c8c800">板块资讯</text><text x="1540" y="1000" style="fill:#c8c800">图文F10</text><text x="1590" y="1000" style="fill:#c8c800">侧边栏《</text>
</g>

<!-- right panel -->
<rect x="1614" y="30" width="1.500" height="975" fill="#b00000"/>
<text x="1632" y="51" font-size="19" fill="#7fffff" textLength="76" lengthAdjust="spacingAndGlyphs">睿能科技</text>
<rect x="1706" y="43" width="23" height="10" fill="#b06a10"/><text x="1706" y="52" font-size="11" fill="#ffd090">拉升</text>
<text class="n s" x="1730" y="51">603933</text>
<text x="1617" y="78" font-size="17" font-weight="bold" fill="#ff3232" letter-spacing="-.6" style="font-family:'DejaVu Sans Mono',monospace">29.61</text>
<text x="1717" y="78" font-size="17" font-weight="bold" fill="#ff3232" letter-spacing="-.6" style="font-family:'DejaVu Sans Mono',monospace">▲0.90</text>
<text x="1892" y="78" font-size="17" font-weight="bold" fill="#ff3232" text-anchor="end" letter-spacing="-.6" style="font-family:'DejaVu Sans Mono',monospace">3.13%</text>
<path d="M1615 86.500H1895M1615 270.500H1895M1615 367.500H1895M1615 429.500H1895M1615 449.500H1895M1615 472.500H1895" stroke="#b00000"/>
<path d="M1615 177.500H1875" stroke="#c89020"/><path d="M1875 177.500H1895" stroke="#4070b0"/>
<g class="l z">
<text x="1617" y="102">卖五</text><text x="1617" y="120">卖四</text><text x="1617" y="138">卖三</text><text x="1617" y="156">卖二</text><text x="1617" y="174">卖一</text>
<text x="1617" y="194">买一</text><text x="1617" y="212">买二</text><text x="1617" y="230">买三</text><text x="1617" y="248">买四</text><text x="1617" y="266">买五</text>
<text x="1617" y="287">今开</text><text x="1617" y="306">最高</text><text x="1617" y="325">最低</text><text x="1617" y="344">现量</text><text x="1617" y="363">外盘</text>
<text x="1757" y="287">均价</text><text x="1757" y="306">量比</text><text x="1757" y="325">市值</text><text x="1757" y="344">总量</text><text x="1757" y="363">内盘</text>
<text x="1617" y="384">换手</text><text x="1617" y="403">净资</text><text x="1617" y="422" textLength="50" lengthAdjust="spacingAndGlyphs">收益(三)</text>
<text x="1757" y="384">股本</text><text x="1757" y="403">流通</text><text x="1757" y="422" textLength="42" lengthAdjust="spacingAndGlyphs">PE(动)</text>
<text x="1616" y="445" textLength="72" lengthAdjust="spacingAndGlyphs">交易状态:</text><text x="1693" y="445" textLength="66" lengthAdjust="spacingAndGlyphs">闭市阶段</text>
<text x="1617" y="466" textLength="66" lengthAdjust="spacingAndGlyphs">主力净额</text>
</g>
<text class="n s" x="1764" y="445">15:00:01</text>
<rect x="1689" y="454" width="11" height="11" fill="none" stroke="#777"/><path d="M1691 457h7M1691 459.500h7M1691 462h7" stroke="#777"/>
<rect x="1709" y="456" width="70" height="7" fill="#00e000"/>
<text x="1805" y="465" font-size="14" fill="#00e000" textLength="48" lengthAdjust="spacingAndGlyphs">-2.04亿</text><text x="1862" y="465" font-size="14" fill="#00e000" textLength="32" lengthAdjust="spacingAndGlyphs">-12%</text>
<g class="n e">
<text class="r" x="1752" y="101">29.75</text><text class="r" x="1752" y="119">29.72</text><text class="r" x="1752" y="137">29.70</text><text class="r" x="1752" y="155">29.69</text><text class="r" x="1752" y="173">29.66</text>
<text class="r" x="1752" y="193">29.61</text><text class="r" x="1752" y="211">29.60</text><text class="r" x="1752" y="229">29.59</text><text class="r" x="1752" y="247">29.58</text><text class="r" x="1752" y="265">29.57</text>
<text class="y" x="1893" y="101">3</text><text class="y" x="1893" y="119">4</text><text class="y" x="1893" y="137">48</text><text class="y" x="1893" y="155">1</text><text class="y" x="1893" y="173">7</text>
<text class="y" x="1893" y="193">15</text><text class="y" x="1893" y="211">752</text><text class="y" x="1893" y="229">21</text><text class="y" x="1893" y="247">46</text><text class="y" x="1893" y="265">21</text>
<text class="r" x="1752" y="286">30.79</text><text class="r" x="1752" y="305">31.58</text><text class="r" x="1752" y="324">28.78</text><text class="m" x="1752" y="343">7172</text><text class="r" x="1752" y="362">229066</text>
<text class="r" x="1893" y="286">30.33</text><text class="r" x="1893" y="305">1.58</text><text class="s" x="1893" y="324">61.5亿</text><text class="s" x="1893" y="343">561267</text><text class="gr" x="1893" y="362">332201</text>
<text class="s" x="1752" y="383">27.04%</text><text class="s" x="1752" y="402">6.36</text><text class="s" x="1752" y="421">0.200</text>
<text class="s" x="1893" y="383">2.08亿</text><text class="s" x="1893" y="402">2.08亿</text><text class="s" x="1893" y="421">113.1</text>
</g>
<rect x="1715.500" y="291.500" width="38" height="17" fill="none" stroke="#666"/>

<!-- ticks -->
<path d="M1615 581H1895M1615 941H1895M1615 959.500H1895" stroke="#c00000" stroke-dasharray="1 2"/>
<g class="n s"><text x="1617" y="487">14:55</text><text x="1617" y="595">14:56</text><text x="1617" y="955">14:57</text><text x="1617" y="973">15:00</text></g>
<g class="n r e">
<text x="1753" y="487">29.37</text><text x="1753" y="505">29.36</text><text x="1753" y="523">29.37</text><text x="1753" y="541">29.43</text><text x="1753" y="559">29.43</text><text x="1753" y="577">29.44</text><text x="1753" y="595">29.46</text><text x="1753" y="613">29.46</text><text x="1753" y="631">29.46</text><text x="1753" y="649">29.45</text><text x="1753" y="667">29.35</text><text x="1753" y="685">29.46</text><text x="1753" y="703">29.38</text><text x="1753" y="721">29.40</text><text x="1753" y="739">29.39</text><text x="1753" y="757">29.38</text><text x="1753" y="775">29.40</text><text x="1753" y="793">29.41</text><text x="1753" y="811">29.41</text><text x="1753" y="829">29.38</text><text x="1753" y="847">29.40</text><text x="1753" y="865">29.40</text><text x="1753" y="883">29.40</text><text x="1753" y="901">29.40</text><text x="1753" y="919">29.39</text><text x="1753" y="937">29.40</text><text x="1753" y="955">29.39</text><text x="1753" y="973">29.61</text>
</g>
<g class="n e">
<text class="y" x="1834" y="487">77</text><text class="y" x="1834" y="505">22</text><text class="y" x="1834" y="523">45</text><text class="y" x="1834" y="541">28</text><text class="y" x="1834" y="559">37</text><text class="y" x="1834" y="577">34</text><text class="y" x="1834" y="595">97</text><text class="y" x="1834" y="613">69</text><text class="y" x="1834" y="631">123</text><text class="y" x="1834" y="649">97</text><text class="m" x="1834" y="667">544</text><text class="y" x="1834" y="685">182</text><text class="m" x="1834" y="703">1068</text><text class="y" x="1834" y="721">55</text><text class="y" x="1834" y="739">105</text><text class="y" x="1834" y="757">110</text><text class="y" x="1834" y="775">218</text><text class="y" x="1834" y="793">220</text><text class="y" x="1834" y="811">256</text><text class="y" x="1834" y="829">359</text><text class="y" x="1834" y="847">331</text><text class="y" x="1834" y="865">170</text><text class="y" x="1834" y="883">413</text><text class="y" x="1834" y="901">117</text><text class="y" x="1834" y="919">144</text><text class="m" x="1834" y="937">573</text><text class="m" x="1834" y="955">540</text><text class="m" x="1834" y="973">7172</text>
</g>
<g class="n" text-anchor="middle">
<text class="gr" x="1856" y="487">S</text><text class="gr" x="1856" y="505">S</text><text class="gr" x="1856" y="523">S</text><text class="r" x="1856" y="541">B</text><text class="r" x="1856" y="559">B</text><text class="r" x="1856" y="577">B</text><text class="r" x="1856" y="595">B</text><text class="gr" x="1856" y="613">S</text><text class="gr" x="1856" y="631">S</text><text class="gr" x="1856" y="649">S</text><text class="gr" x="1856" y="667">S</text><text class="r" x="1856" y="685">B</text><text class="gr" x="1856" y="703">S</text><text class="r" x="1856" y="721">B</text><text class="gr" x="1856" y="757">S</text><text class="r" x="1856" y="775">B</text><text class="r" x="1856" y="793">B</text><text class="gr" x="1856" y="811">S</text><text class="gr" x="1856" y="829">S</text><text class="r" x="1856" y="847">B</text><text class="gr" x="1856" y="865">S</text><text class="gr" x="1856" y="883">S</text><text class="r" x="1856" y="901">B</text><text class="gr" x="1856" y="919">S</text><text class="r" x="1856" y="937">B</text><text class="gr" x="1856" y="955">S</text>
</g>
<g class="n g e">
<text x="1893" y="487">17</text><text x="1893" y="505">12</text><text x="1893" y="523">13</text><text x="1893" y="541">11</text><text x="1893" y="559">11</text><text x="1893" y="577">11</text><text x="1893" y="595">29</text><text x="1893" y="613">14</text><text x="1893" y="631">39</text><text x="1893" y="649">38</text><text x="1893" y="667">82</text><text x="1893" y="685">47</text><text x="1893" y="703">87</text><text x="1893" y="721">15</text><text x="1893" y="739">28</text><text x="1893" y="757">30</text><text x="1893" y="775">40</text><text x="1893" y="793">32</text><text x="1893" y="811">29</text><text x="1893" y="829">44</text><text x="1893" y="847">33</text><text x="1893" y="865">23</text><text x="1893" y="883">66</text><text x="1893" y="901">33</text><text x="1893" y="919">50</text><text x="1893" y="937">81</text><text x="1893" y="955">54</text><text x="1893" y="973">697</text>
</g>
<rect x="1615" y="987" width="280" height="1" fill="#b00000"/>
<path d="M1645 988V1004M1675 988V1004M1706 988V1004M1737 988V1004M1768 988V1004M1799 988V1004M1830 988V1004M1861 988V1004" stroke="#a00000"/>
<g font-size="13" fill="#a8a8a8" text-anchor="middle"><text x="1629" y="1001" style="fill:#55ffff">笔</text><text x="1660" y="1001">价</text><text x="1691" y="1001">细</text><text x="1721" y="1001">势</text><text x="1752" y="1001">联</text><text x="1783" y="1001">值</text><text x="1814" y="1001">主</text><text x="1845" y="1001">逆</text><text x="1878" y="1001">筹</text></g>

<!-- ticker and status -->
<rect y="1005" width="1895" height="23" fill="#3b404b"/>
<rect y="1028" width="1895" height="22" fill="#272b33"/>
<g class="tk">
<text x="0" y="1021" textLength="38" lengthAdjust="spacingAndGlyphs">峰电气</text>
<text x="78" y="1021" textLength="372" lengthAdjust="spacingAndGlyphs">珠海港昇（836052）：万和证券股份有限公司关于退出为珠海港昇新能</text>
<text x="490" y="1021" textLength="288" lengthAdjust="spacingAndGlyphs">东珠生态（603359）：关于项目中标公示的提示性公告</text>
<text x="818" y="1021" textLength="372" lengthAdjust="spacingAndGlyphs">神州科技（834306）：诚通证券关于单方解除与北京神州互联科技股份</text>
<text x="1229" y="1021" textLength="373" lengthAdjust="spacingAndGlyphs">呼阀控股（835141）：长江承销保荐关于单方解除与呼阀科技控股股份</text>
<text x="1641" y="1021" textLength="252" lengthAdjust="spacingAndGlyphs">ST昌旺（839649）：申万宏源承销保荐关于单方</text>
</g>
<circle cx="12" cy="1041" r="5.500" fill="#5a6070"/><path d="M9.500 1040l2.500 3 2.500-3" stroke="#222" fill="none"/>
<g class="st">
<g fill="#ffffff"><text x="25" y="1045" textLength="28" lengthAdjust="spacingAndGlyphs">上证</text><text x="240" y="1045" textLength="46" lengthAdjust="spacingAndGlyphs">7167亿</text><text x="299" y="1045" textLength="28" lengthAdjust="spacingAndGlyphs">深证</text><text x="515" y="1045" textLength="52" lengthAdjust="spacingAndGlyphs">10090亿</text><text x="574" y="1045" textLength="28" lengthAdjust="spacingAndGlyphs">创业</text><text x="783" y="1045" textLength="52" lengthAdjust="spacingAndGlyphs">4770亿</text><text x="852" y="1045" textLength="41" lengthAdjust="spacingAndGlyphs">总成交</text><text x="903" y="1045" textLength="53" lengthAdjust="spacingAndGlyphs">17391亿</text><text x="1001" y="1045" textLength="36" lengthAdjust="spacingAndGlyphs">已连接</text></g>
<g fill="#e84040"><text x="61" y="1045" textLength="44" lengthAdjust="spacingAndGlyphs">3902.81</text><text x="133" y="1045" textLength="35" lengthAdjust="spacingAndGlyphs">27.02</text><text x="183" y="1045" textLength="39" lengthAdjust="spacingAndGlyphs">0.70%</text><text x="335" y="1045" textLength="63" lengthAdjust="spacingAndGlyphs">13147.68</text><text x="404" y="1045" textLength="42" lengthAdjust="spacingAndGlyphs">140.96</text><text x="459" y="1045" textLength="37" lengthAdjust="spacingAndGlyphs">1.08%</text><text x="610" y="1045" textLength="50" lengthAdjust="spacingAndGlyphs">3109.30</text><text x="683" y="1045" textLength="34" lengthAdjust="spacingAndGlyphs">41.82</text><text x="733" y="1045" textLength="38" lengthAdjust="spacingAndGlyphs">1.36%</text></g>
</g>
<circle cx="971" cy="1040" r="5.500" fill="none" stroke="#667" stroke-width="2"/><path d="M969 1044l4-8" stroke="#667"/>
<rect x="985" y="1033" width="12" height="14" rx="3" fill="#5a6478"/><text x="988" y="1044" font-size="11" fill="#dde">3</text>
<rect x="1725" y="1034" width="16" height="10" rx="2" fill="#5a6070"/><path d="M1728 1037h2M1732 1037h2M1736 1037h2M1729 1041h8" stroke="#272b33"/>
<path d="M1758 1036h4v8h-4zM1764 1033h4v14h-4z" fill="#5a6070"/>
<circle cx="1793" cy="1040" r="6" fill="none" stroke="#5a6070" stroke-width="2"/><path d="M1793 1032v16M1785 1040h16" stroke="#5a6070" stroke-width="1.500"/>
<path d="M1817 1033l2 3h8l2-3v5l-2 1v5h2v4h-12v-4h2v-5l-2-1Z" fill="#f4f4f4"/>
<text x="1845" y="1045" font-size="13" fill="#c8ecf4" style="font-family:'DejaVu Sans Mono',monospace" textLength="47" lengthAdjust="spacingAndGlyphs">16:34:20</text>

<!-- sidebar -->
<rect x="1895" y="30" width="25" height="1020" fill="#f0f0f0"/>
<g fill="none" stroke="#2f7bdc" stroke-width="1.300">
<path d="M1900 42l6-5v3h7v4h-7v3Z"/>
<path d="M1908 58l5.500 6h-3v7h-5v-7h-3Z"/>
<path d="M1908 95l5.500-6h-3v-7h-5v7h-3Z"/>
</g>
<g>
<rect class="bx" x="1900.500" y="103.500" width="14" height="14"/><path d="M1902 106h6M1902 109h6M1902 112h6" stroke="#c33"/><path d="M1909 106h4M1909 109h4" stroke="#393"/><circle cx="1910" cy="114" r="3" fill="#999"/>
<rect class="bx" x="1900.500" y="126.500" width="14" height="14"/><path d="M1902 129h3M1906 129h3M1910 129h3" stroke="#c33" stroke-dasharray="1 1"/><path d="M1902 132h11" stroke="#339" stroke-dasharray="2 1"/><path d="M1902 135h11" stroke="#c33" stroke-dasharray="2 1"/><path d="M1902 138h11" stroke="#339" stroke-dasharray="2 1"/>
<rect class="bx" x="1900.500" y="149.500" width="14" height="14"/><path d="M1902 160l4-3 2 1 5-4" stroke="#c33" fill="none"/>
<rect class="bx" x="1900.500" y="172.500" width="14" height="14"/><rect x="1903" y="177" width="2" height="5" fill="#c33"/><rect x="1907" y="175" width="2" height="6" fill="#393"/><rect x="1911" y="174" width="2" height="7" fill="#c33"/>
<rect class="bx" x="1900.500" y="196.500" width="14" height="14"/><path d="M1902 200h11M1902 203h11M1902 206h11" stroke="#555"/>
<rect class="bx" x="1900.500" y="220.500" width="14" height="14"/><text x="1902" y="232" font-size="10" fill="#0b4ea2">Fio</text>
<rect class="bx" x="1900.500" y="243.500" width="14" height="14"/><path d="M1903 246h4v3h-4zM1908 250h4v3h-4zM1908 254h4v2h-4z" fill="#e8b030"/>
<rect class="bx" x="1900.500" y="266.500" width="14" height="14"/><text x="1902" y="278" font-size="11" fill="#c06010">自</text>
<rect class="bx" x="1900.500" y="289.500" width="14" height="14"/><text x="1902" y="301" font-size="10" fill="#0b4ea2">F1z</text>
<circle cx="1908" cy="319" r="7.500" fill="#fff" stroke="#197a6a"/><text x="1902" y="322" font-size="8.500" fill="#0b4ea2" font-style="italic">f(x)</text>
<rect class="bx" x="1900.500" y="334.500" width="14" height="14"/><circle cx="1907.500" cy="341.500" r="4" fill="none" stroke="#0b4ea2"/>
<path d="M1898 356h20" stroke="#bbb"/>
<rect class="bx" x="1900.500" y="366.500" width="14" height="14"/><path d="M1902 371l2-2 2 2 2-2 2 2 2-2 1 1" stroke="#c33" fill="none"/><path d="M1902 376l2-2 2 2 2-2 2 2 2-2 1 1" stroke="#33c" fill="none"/>
<text x="1898" y="400" font-size="10" font-weight="bold" fill="#2a60c0" textLength="20" lengthAdjust="spacingAndGlyphs">RSI</text>
<text x="1902" y="424" font-size="16" font-weight="bold" fill="#c04040">$</text>
<path d="M1908 434l3 4h-6ZM1908 449l3-4h-6ZM1900 441l4-3v6ZM1916 441l-4-3v6Z" fill="#1a5cc0"/><circle cx="1908" cy="441" r="2.500" fill="#1a5cc0"/>
<path d="M1900 471l3-6 9-9 3 3-9 9Z" fill="#e0b060" stroke="#a07030"/>
<path d="M1898 479h20" stroke="#bbb"/>
<rect class="bx" x="1900.500" y="489.500" width="14" height="13"/><text x="1902" y="500" font-size="10" fill="#0b4ea2">Fs</text>
<rect class="bx" x="1900.500" y="511.500" width="14" height="13" style="fill:#bfe8c0"/><path d="M1903 518a4 4 0 0 1 8-1M1912 518a4 4 0 0 1-8 1" stroke="#2a8a2a" fill="none"/>
</g>
<rect x="1896" y="645" width="23" height="23" fill="#fff" stroke="#bbb"/>
<g class="side">
<text x="1907" y="545">1</text><text x="1907" y="568">5</text><text x="1907" y="591">15</text><text x="1907" y="614">30</text><text x="1907" y="637">60</text><text x="1908" y="662" font-size="13">日</text><text x="1908" y="685" font-size="13">周</text><text x="1908" y="707" font-size="13">月</text><text x="1908" y="730">N</text><text x="1908" y="753" font-size="13">多</text><text x="1908" y="776" font-size="13">季</text><text x="1908" y="799" font-size="13">年</text>
</g>
</svg>
</body></html>
